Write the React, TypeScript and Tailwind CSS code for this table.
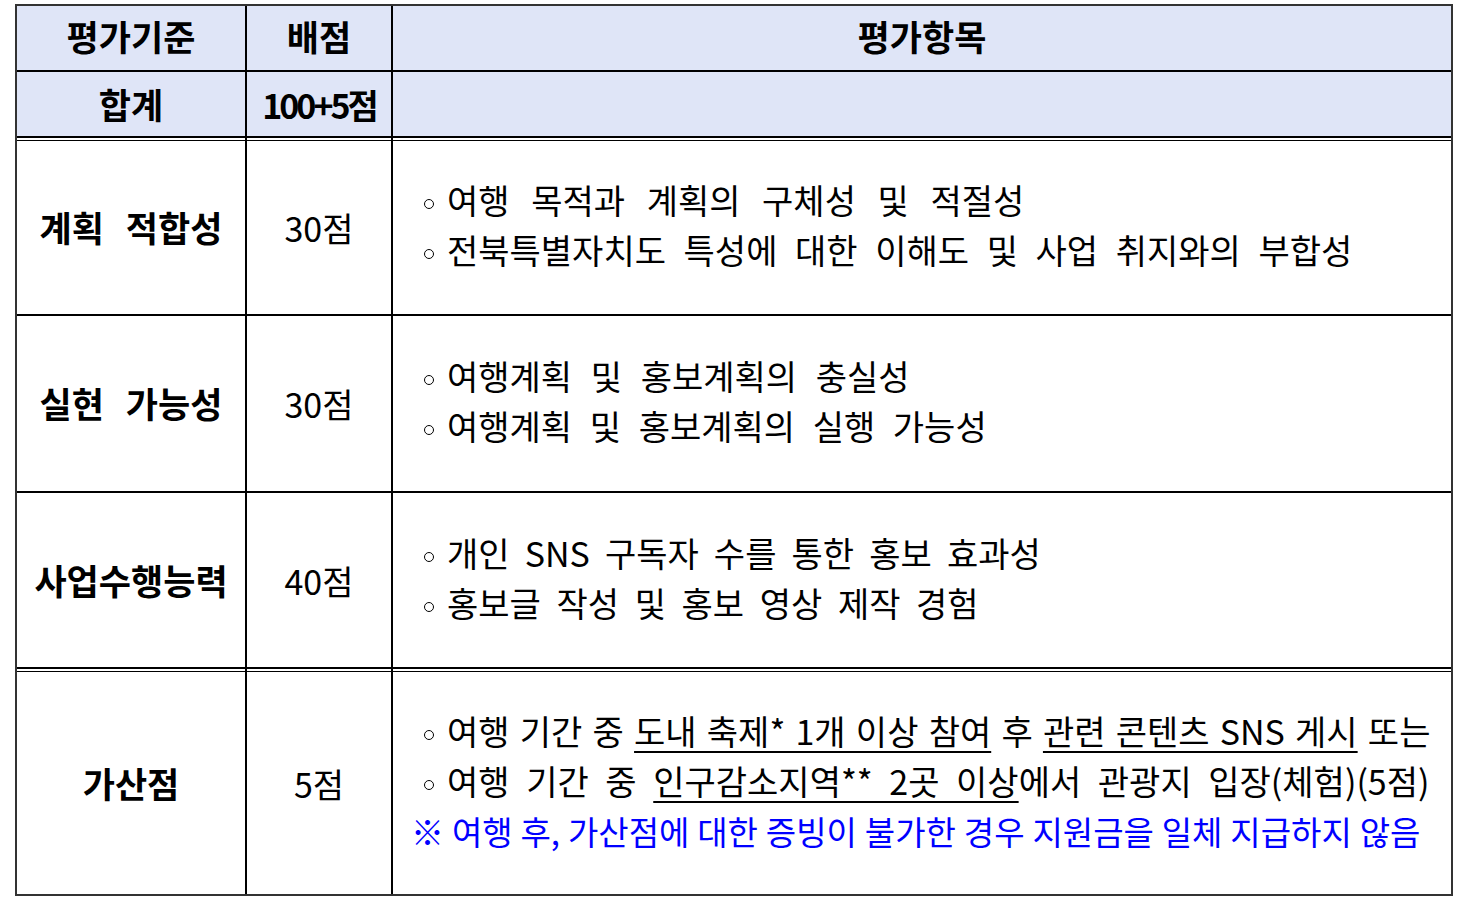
import React from "react";

const font = { fontFamily: '"Noto Sans CJK KR", "Noto Sans", sans-serif' };

function U({ children }: { children: React.ReactNode }) {
  return <span className="underline decoration-[2px] underline-offset-[6px]">{children}</span>;
}

function Bullet({ children, cls = "" }: { children: React.ReactNode; cls?: string }) {
  return (
    <div className={`flex items-center whitespace-nowrap ${cls}`}>
      <span className="mr-[13px] mt-[8px] inline-block h-[10px] w-[10px] shrink-0 rounded-full border-[1.5px] border-black" />
      <span>{children}</span>
    </div>
  );
}

function Row({
  label,
  score,
  h,
  labelCls = "",
  children,
}: {
  label: string;
  score: string;
  h: string;
  labelCls?: string;
  children: React.ReactNode;
}) {
  return (
    <div className={`grid grid-cols-[230px_146px_1fr] ${h}`}>
      <div className={`flex items-center justify-center whitespace-nowrap border-r-2 border-black text-[35px] font-bold ${labelCls}`}>
        {label}
      </div>
      <div className="flex items-center justify-center border-r-2 border-black text-[34px]">{score}</div>
      <div className="flex flex-col justify-center pb-[5px] pl-[31px] text-[34px] leading-[50px]">{children}</div>
    </div>
  );
}

function DoubleLine() {
  return (
    <div className="grid h-[5px] grid-cols-[230px_146px_1fr] border-t-2 border-b border-black">
      <div className="border-r-2 border-black" />
      <div className="border-r-2 border-black" />
      <div />
    </div>
  );
}

export default function App() {
  return (
    <div className="min-h-[900px] bg-white text-black" style={font}>
      <div className="ml-[15px] pt-[4px]">
        <div className="w-[1438px] border-2 border-[#333]">
          <div className="bg-[#dfe5f7]">
            <div className="grid h-[66px] grid-cols-[230px_146px_1fr] border-b-2 border-black text-[35px] font-bold">
              <div className="flex items-center justify-center border-r-2 border-black pb-[4px]">평가기준</div>
              <div className="flex items-center justify-center border-r-2 border-black pb-[4px]">배점</div>
              <div className="flex items-center justify-center pb-[4px]">평가항목</div>
            </div>
            <div className="grid h-[64px] grid-cols-[230px_146px_1fr] text-[35px] font-bold">
              <div className="flex items-center justify-center border-r-2 border-black">합계</div>
              <div className="flex items-center justify-center border-r-2 border-black text-[34px] tracking-[-3px]">
                100+5점
              </div>
              <div />
            </div>
          </div>
          <DoubleLine />
          <Row label="계획 적합성" score="30점" h="h-[175px] border-b-2 border-black" labelCls="[word-spacing:14px]">
            <Bullet cls="[word-spacing:14px]">여행 목적과 계획의 구체성 및 적절성</Bullet>
            <Bullet cls="[word-spacing:10px]">전북특별자치도 특성에 대한 이해도 및 사업 취지와의 부합성</Bullet>
          </Row>
          <Row label="실현 가능성" score="30점" h="h-[177px] border-b-2 border-black" labelCls="[word-spacing:14px]">
            <Bullet cls="[word-spacing:11px]">여행계획 및 홍보계획의 충실성</Bullet>
            <Bullet cls="[word-spacing:10px]">여행계획 및 홍보계획의 실행 가능성</Bullet>
          </Row>
          <Row label="사업수행능력" score="40점" h="h-[174px]">
            <Bullet cls="[word-spacing:7.5px]">개인 SNS 구독자 수를 통한 홍보 효과성</Bullet>
            <Bullet cls="[word-spacing:8px]">홍보글 작성 및 홍보 영상 제작 경험</Bullet>
          </Row>
          <DoubleLine />
          <Row label="가산점" score="5점" h="h-[222px]">
            <Bullet cls="[word-spacing:2.6px]">
              여행 기간 중 <U>도내 축제* 1개 이상 참여</U> 후 <U>관련 콘텐츠 SNS 게시</U> 또는
            </Bullet>
            <Bullet cls="[word-spacing:9px]">
              여행 기간 중 <U>인구감소지역** 2곳 이상</U>에서 관광지 입장(체험)(5점)
            </Bullet>
            <div className="-ml-[13px] whitespace-nowrap text-[33px] text-[#0000ff] [word-spacing:0.5px]">
              ※ 여행 후, 가산점에 대한 증빙이 불가한 경우 지원금을 일체 지급하지 않음
            </div>
          </Row>
        </div>
      </div>
    </div>
  );
}
